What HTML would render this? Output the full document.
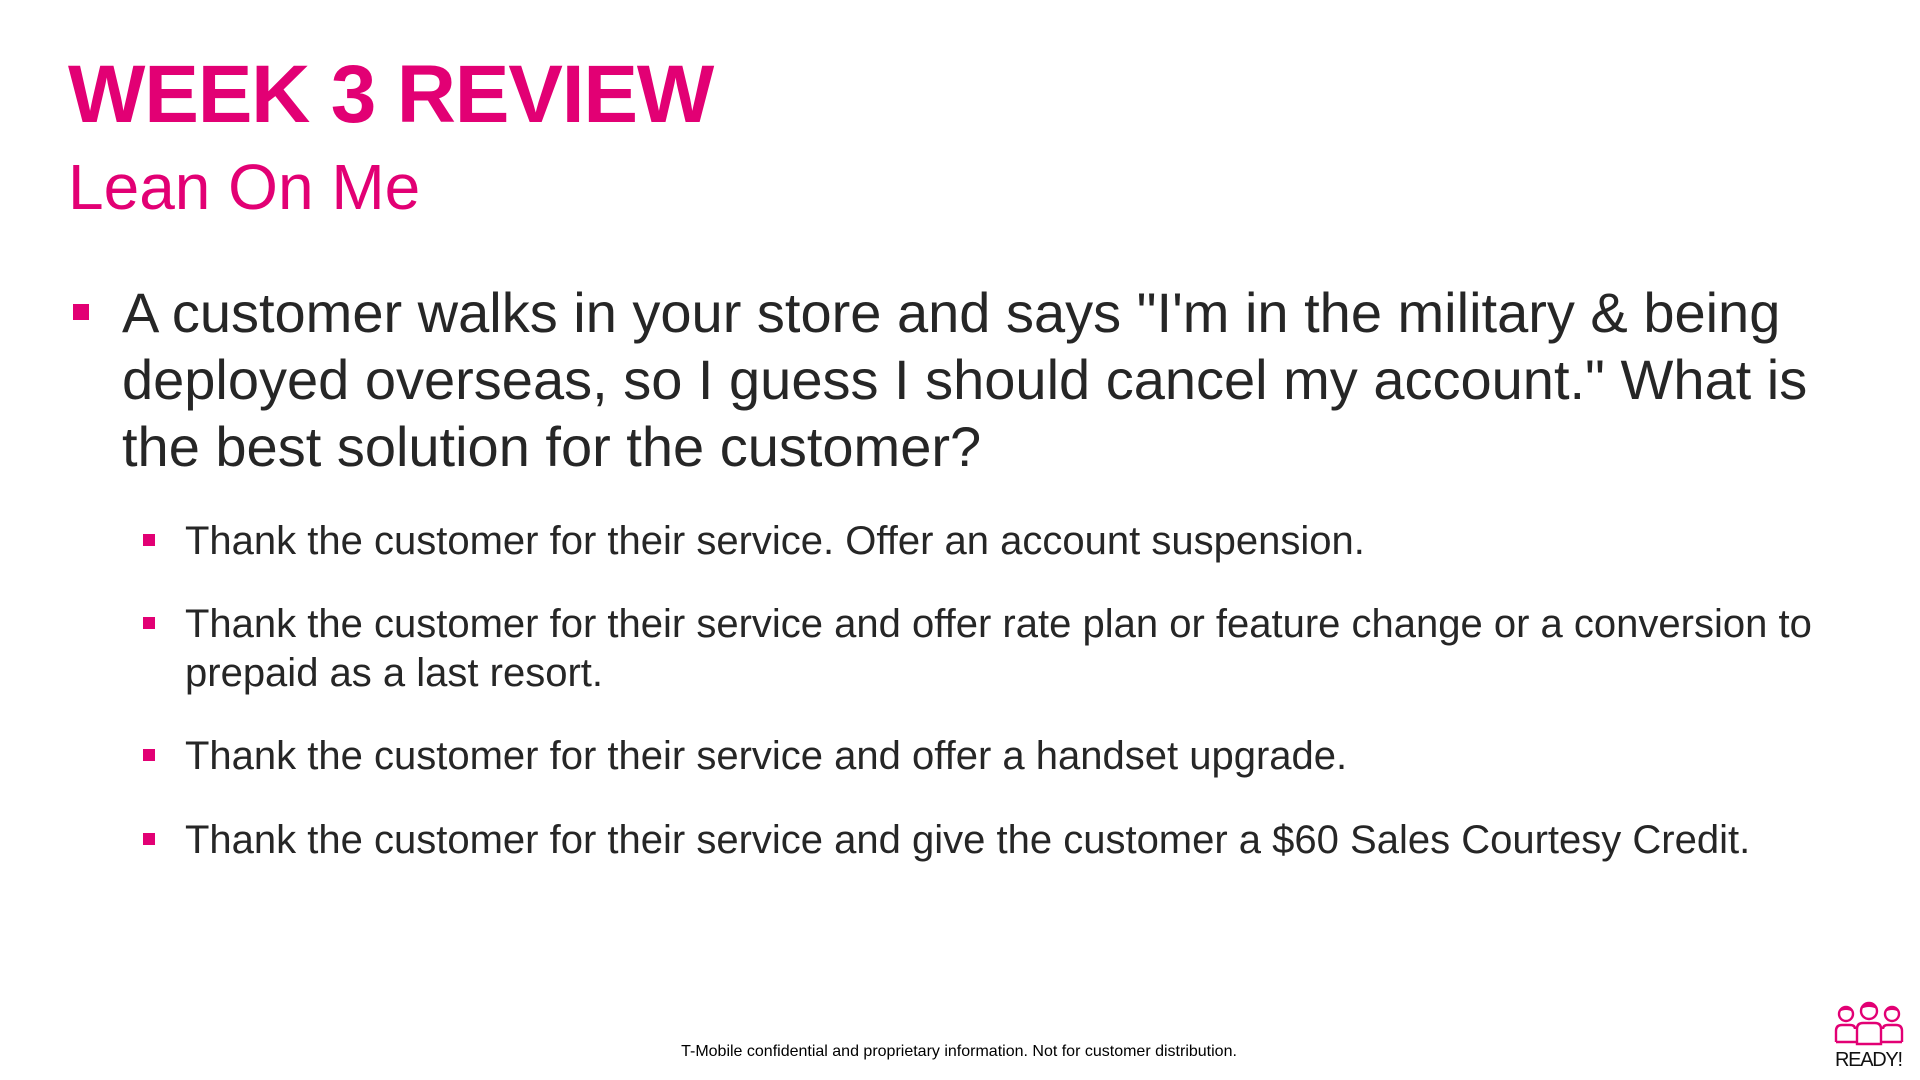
<!DOCTYPE html>
<html><head><meta charset="utf-8"><style>
html,body{margin:0;padding:0;background:#fff;}
body{width:1920px;height:1080px;position:relative;overflow:hidden;font-family:"Liberation Sans",Arial,sans-serif;}
.t{position:absolute;left:68px;top:48px;font-size:82px;font-weight:bold;color:#e20074;letter-spacing:-1.2px;white-space:nowrap;}
.s{position:absolute;left:68px;top:150px;font-size:64px;color:#e20074;white-space:nowrap;}
.m{position:absolute;left:122px;top:279px;width:1720px;font-size:56px;line-height:67px;color:#262626;}
.b1{position:absolute;left:73px;top:304px;width:16px;height:16px;background:#e20074;}
.sb{position:absolute;left:185px;width:1680px;font-size:40px;line-height:49px;color:#262626;}
.sq{position:absolute;left:143px;width:12px;height:12px;background:#e20074;}
.f{position:absolute;left:0;width:1918px;top:1043px;text-align:center;font-size:16px;color:#000;}
</style></head><body>
<div class="t">WEEK 3 REVIEW</div>
<div class="s">Lean On Me</div>
<div class="b1"></div>
<div class="m">A customer walks in your store and says "I'm in the military &amp; being deployed overseas, so I guess I should cancel my account." What is the best solution for the customer?</div>
<div class="sq" style="top:534px"></div>
<div class="sb" style="top:517px">Thank the customer for their service. Offer an account suspension.</div>
<div class="sq" style="top:617px"></div>
<div class="sb" style="top:600px">Thank the customer for their service and offer rate plan or feature change or a conversion to prepaid as a last resort.</div>
<div class="sq" style="top:749px"></div>
<div class="sb" style="top:732px">Thank the customer for their service and offer a handset upgrade.</div>
<div class="sq" style="top:833px"></div>
<div class="sb" style="top:816px">Thank the customer for their service and give the customer a $60 Sales Courtesy Credit.</div>
<div class="f">T-Mobile confidential and proprietary information. Not for customer distribution.</div>
<svg style="position:absolute;left:1833px;top:998px" width="72" height="70" viewBox="0 0 72 70">
<g fill="none" stroke="#e20074" stroke-width="2.4">
<circle cx="13" cy="16" r="7"/><circle cx="36" cy="13" r="8"/><circle cx="59" cy="16" r="7"/>
<path d="M3 44 V33 Q3 27 9 27 H17 Q22 27 22 31"/>
<path d="M69 44 V33 Q69 27 63 27 H55 Q50 27 50 31"/>
<path d="M24 46 V31 Q24 25 30 25 H42 Q48 25 48 31 V46 Z"/>
<path d="M3 44 H24 M48 44 H69"/>
</g>
<g fill="#e20074"><path d="M6 14 Q13 4 20 14 Q13 10 6 14Z"/><path d="M28 11 Q36 0 44 11 Q36 7 28 11Z"/><path d="M52 14 Q59 4 66 14 Q59 10 52 14Z"/></g>
<text x="36" y="68" text-anchor="middle" font-family="Liberation Sans" font-size="20" fill="#111" textLength="68">READY!</text>
</svg>
</body></html>
